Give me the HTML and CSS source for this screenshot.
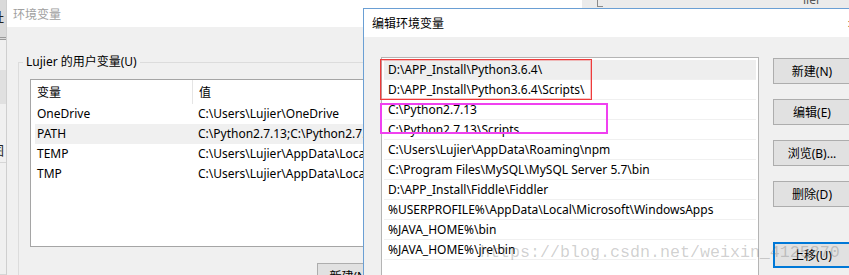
FILE: index.html
```html
<!DOCTYPE html>
<html lang="zh-CN">
<head>
    <meta charset="UTF-8">
    <meta name="viewport" content="width=device-width, initial-scale=1.0">
    <title>编辑环境变量</title>
    <link rel="stylesheet" href="styles.css">
</head>
<body>
    <div class="desktop">
        <!-- Window behind, on the far left -->
        <div class="side-strip">
            <div class="strip-top"><span>址</span></div>
            <div class="strip-gap"></div>
            <div class="strip-dark"></div>
            <div class="strip-glyph"><span>图</span></div>
            <div class="strip-rest"></div>
        </div>

        <!-- Window behind, above the edit dialog -->
        <div class="top-strip">
            <span class="top-tick"></span>
            <span class="top-text">iler</span>
        </div>

        <!-- 环境变量 dialog -->
        <div class="window env-window">
            <div class="titlebar">
                <span class="title inactive">环境变量</span>
            </div>
            <div class="window-body">
                <fieldset class="group">
                    <legend>Lujier 的用户变量(U)</legend>
                    <div class="var-list">
                        <div class="var-head">
                            <span class="col-name">变量</span>
                            <span class="col-value">值</span>
                        </div>
                        <div class="var-row">
                            <span class="col-name">OneDrive</span>
                            <span class="col-value">C:\Users\Lujier\OneDrive</span>
                        </div>
                        <div class="var-row selected">
                            <span class="col-name">PATH</span>
                            <span class="col-value">C:\Python2.7.13;C:\Python2.7.13\Scripts;D:\APP_Install\Python3.6.4\</span>
                        </div>
                        <div class="var-row">
                            <span class="col-name">TEMP</span>
                            <span class="col-value">C:\Users\Lujier\AppData\Local\Temp</span>
                        </div>
                        <div class="var-row">
                            <span class="col-name">TMP</span>
                            <span class="col-value">C:\Users\Lujier\AppData\Local\Temp</span>
                        </div>
                    </div>
                    <div class="group-buttons">
                        <button class="btn">新建(N)...</button>
                        <button class="btn">编辑(E)...</button>
                        <button class="btn">删除(D)</button>
                    </div>
                </fieldset>
            </div>
        </div>

        <!-- 编辑环境变量 dialog -->
        <div class="window edit-window">
            <div class="titlebar">
                <span class="title">编辑环境变量</span>
                <span class="close">✕</span>
            </div>
            <div class="window-body edit-body">
                <div class="path-list">
                    <div class="path-row selected">D:\APP_Install\Python3.6.4\</div>
                    <div class="path-row">D:\APP_Install\Python3.6.4\Scripts\</div>
                    <div class="path-row">C:\Python2.7.13</div>
                    <div class="path-row">C:\Python2.7.13\Scripts</div>
                    <div class="path-row">C:\Users\Lujier\AppData\Roaming\npm</div>
                    <div class="path-row">C:\Program Files\MySQL\MySQL Server 5.7\bin</div>
                    <div class="path-row">D:\APP_Install\Fiddle\Fiddler</div>
                    <div class="path-row">%USERPROFILE%\AppData\Local\Microsoft\WindowsApps</div>
                    <div class="path-row">%JAVA_HOME%\bin</div>
                    <div class="path-row">%JAVA_HOME%\jre\bin</div>

                    <!-- annotation boxes drawn over the list -->
                    <div class="mark mark-red"></div>
                    <div class="mark mark-pink"></div>
                </div>
                <div class="side-buttons">
                    <button class="btn">新建(N)</button>
                    <button class="btn">编辑(E)</button>
                    <button class="btn">浏览(B)...</button>
                    <button class="btn">删除(D)</button>
                    <button class="btn btn-default btn-gap">上移(U)</button>
                </div>
            </div>
        </div>

        <div class="watermark">https://blog.csdn.net/weixin_4125870</div>
    </div>
</body>
</html>
```

FILE: styles.css
```css
/* Page */
body {
    margin: 0;
    padding: 0;
    background-color: #f0f0f0;
    font-family: "Noto Sans", "Noto Sans CJK SC", sans-serif;
    font-size: 12px;
    color: #000;
}

.desktop {
    position: relative;
    width: 849px;
    height: 275px;
    overflow: hidden;
    background-color: #f0f0f0;
}

/* Strip of another window on the left */
.side-strip {
    position: absolute;
    left: 0;
    top: 0;
    width: 6px;
    height: 275px;
    border-right: 1px solid #cfcfcf;
    display: flex;
    flex-direction: column;
    overflow: hidden;
}

.strip-top {
    height: 37px;
    background-color: #dadada;
    border-bottom: 3px double #9a9a9a;
    position: relative;
}

.strip-top span,
.strip-glyph span {
    display: block;
    margin-left: -9px;
    margin-top: 9px;
    font-family: "Noto Sans CJK SC", sans-serif;
    font-size: 13px;
    line-height: 16px;
    color: #222;
}

.strip-gap {
    height: 30px;
    background-color: #f0f0f0;
}

.strip-dark {
    height: 34px;
    background-color: #e0e0e0;
}

.strip-glyph {
    height: 58px;
    background-color: #f0f0f0;
    border-bottom: 1px solid #d6d6d6;
}

.strip-glyph span {
    margin-top: 38px;
}

.strip-rest {
    flex: 1;
    background-color: #f0f0f0;
    border-bottom: 1px solid #d6d6d6;
}

/* Strip of another window above the edit dialog */
.top-strip {
    position: absolute;
    left: 363px;
    top: 0;
    width: 486px;
    height: 8px;
    background-color: #ebebeb;
    overflow: hidden;
}

.top-tick {
    position: absolute;
    left: 234px;
    top: 0;
    width: 5px;
    height: 6px;
    border-left: 1px solid #8a8a8a;
    border-bottom: 1px solid #8a8a8a;
}

.top-text {
    position: absolute;
    left: 440px;
    top: -9px;
    font-size: 12px;
    color: #555;
}

/* Windows */
.window {
    position: absolute;
    background-color: #f0f0f0;
    display: flex;
    flex-direction: column;
}

.titlebar {
    display: flex;
    align-items: center;
    justify-content: space-between;
    background-color: #fff;
    flex-shrink: 0;
}

.title {
    font-size: 12px;
    color: #000;
}

.title.inactive {
    color: #a0a0a0;
}

.window-body {
    flex: 1;
    background-color: #f0f0f0;
}

/* 环境变量 */
.env-window {
    left: 7px;
    top: 0;
    width: 575px;
    height: 300px;
}

.env-window .titlebar {
    height: 27px;
    padding-left: 6px;
}

.group {
    min-width: 0;
    margin: 27px 12px 0 11px;
    padding: 0 11px 0 11px;
    border: 1px solid #dcdcdc;
    border-bottom: none;
}

.group legend {
    margin-left: -7px;
    padding: 0 3px;
    line-height: 16px;
    font-size: 12px;
    color: #000;
}

.var-list {
    margin-top: 9px;
    height: 166px;
    background-color: #fff;
    border: 1px solid #a5a5a5;
    overflow: hidden;
}

.var-head,
.var-row {
    display: flex;
    margin: 0 4px;
    white-space: nowrap;
}

.var-head {
    height: 24px;
    align-items: center;
    margin-left: 4px;
}

.var-head .col-name {
    align-self: stretch;
    display: flex;
    align-items: center;
    border-right: 1px solid #e5e5e5;
}

.var-row {
    height: 20px;
    line-height: 20px;
}

.var-row.selected {
    background-color: #f0f0f0;
}

.col-name {
    width: 155px;
    padding-left: 2px;
    flex-shrink: 0;
}

.col-value {
    padding-left: 6px;
}

.group-buttons {
    display: flex;
    justify-content: flex-end;
    gap: 8px;
    margin-top: 16px;
}

/* Buttons */
.btn {
    height: 26px;
    padding: 0;
    font-family: "Noto Sans", "Noto Sans CJK SC", sans-serif;
    font-size: 12px;
    color: #000;
    background-color: #e1e1e1;
    border: 1px solid #adadad;
    cursor: pointer;
}

.group-buttons .btn {
    width: 75px;
}

.btn-default {
    border-color: #0078d7;
    box-shadow: inset 0 0 0 1px #0078d7;
}

/* 编辑环境变量 */
.edit-window {
    left: 363px;
    top: 8px;
    width: 510px;
    height: 300px;
    border: 1px solid #6a9fd4;
}

.edit-window .titlebar {
    height: 28px;
    padding-left: 8px;
}

.close {
    width: 46px;
    text-align: center;
    font-size: 11px;
    color: #000;
}

.edit-body {
    display: flex;
    align-items: flex-start;
    gap: 14px;
    padding: 20px 0 0 17px;
}

.path-list {
    position: relative;
    width: 372px;
    height: 260px;
    padding: 2px;
    background-color: #fff;
    border: 1px solid #b4b4b4;
    flex-shrink: 0;
}

.path-row {
    height: 19px;
    line-height: 19px;
    padding-left: 4px;
    border-bottom: 1px solid #f0f0f0;
    white-space: nowrap;
    overflow: hidden;
}

.path-row.selected {
    background-color: #eeeeee;
}

.mark {
    position: absolute;
    left: -2px;
    box-sizing: border-box;
}

.mark-red {
    top: 1px;
    width: 212px;
    height: 41px;
    border: 1px solid #ee3b3b;
    box-shadow: inset 0 0 0 1px rgba(238, 59, 59, 0.3);
}

.mark-pink {
    top: 45px;
    width: 228px;
    height: 31px;
    border: 2px solid #f040f0;
}

.side-buttons {
    display: flex;
    flex-direction: column;
    gap: 15px;
    padding-top: 1px;
}

.side-buttons .btn {
    width: 78px;
}

.btn-gap {
    margin-top: 20px;
}

/* Watermark over everything */
.watermark {
    position: absolute;
    left: 480px;
    top: 243px;
    font-family: "Liberation Mono", monospace;
    font-size: 16.67px;
    line-height: 20px;
    color: rgba(110, 110, 110, 0.33);
    white-space: nowrap;
    pointer-events: none;
}
```
